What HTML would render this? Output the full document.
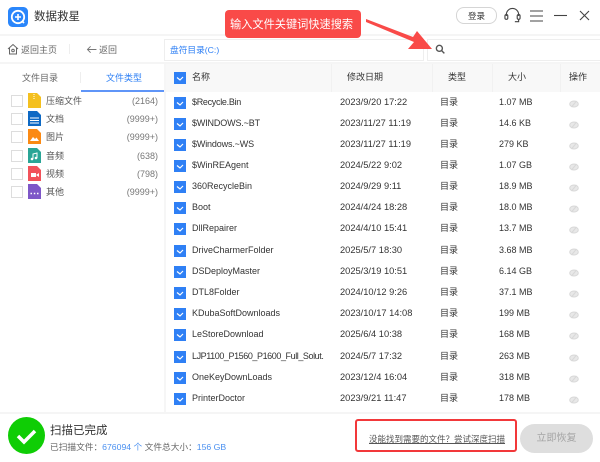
<!DOCTYPE html>
<html lang="zh"><head><meta charset="utf-8"><style>
html,body{margin:0;padding:0;background:#fff}
#p{position:relative;width:600px;height:462px;overflow:hidden;background:#fff;font-family:"Liberation Sans","Noto Sans CJK SC",sans-serif;font-size:9px;color:#333}
#p div,#p svg{position:absolute}
.t{white-space:nowrap;line-height:14px;height:14px;margin-top:2px}
.cb{width:12px;height:12px;background:#2f80f5;left:174px;margin-top:.5px}
.cb svg{left:0;top:0}
.lc{left:11px;width:10px;height:10px;border:1px solid #ddd;background:#fff}
.g{color:#666}
.n{left:192px}.d{left:340px;font-size:9.3px}.y{left:440px}.s{left:499px}
.c{color:#777;text-align:right;width:60px;left:98px}
.l{left:46px;color:#555}
.e{left:569px}
</style></head><body><div id="p">
<!-- title bar -->
<svg style="left:8px;top:7px" width="20" height="20" viewBox="0 0 20 20"><rect width="20" height="20" rx="4.500" fill="#2a86fb"/><circle cx="10" cy="10" r="6.200" fill="none" stroke="#fff" stroke-width="1.800"/><path d="M10 7v6M7 10h6" stroke="#fff" stroke-width="1.600"/><path d="M14 14l2 2" stroke="#fff" stroke-width="1.800"/></svg>
<div class="t" style="left:34px;top:7px;font-size:11.500px;line-height:16px;height:16px;color:#333">数据救星</div>
<div style="left:456px;top:7px;width:39px;height:15px;border:1px solid #d5d5d5;border-radius:8px"></div>
<div class="t" style="left:456px;top:7px;width:41px;text-align:center;font-size:8.500px;color:#333">登录</div>
<svg style="left:504px;top:7px" width="17" height="17" viewBox="0 0 18 17" fill="none" stroke="#444" stroke-width="1.200"><path d="M2.500 9V7.500a6.500 6.500 0 0 1 13 0V9"/><rect x="1" y="7.500" width="3" height="5" rx="1.400"/><rect x="14" y="7.500" width="3" height="5" rx="1.400"/><path d="M15.500 12.500v2.500h-4"/></svg>
<svg style="left:530px;top:10px" width="13" height="12" viewBox="0 0 13 12" stroke="#444" stroke-width="1.100"><path d="M0 1h13M0 6h13M0 11h13"/></svg>
<svg style="left:554px;top:10px" width="13" height="12" viewBox="0 0 13 12" stroke="#444" stroke-width="1.100"><path d="M0 5.500h13"/></svg>
<svg style="left:579px;top:10px" width="11" height="11" viewBox="0 0 11 11" stroke="#444" stroke-width="1.100"><path d="M1 1l9 9M10 1l-9 9"/></svg>
<div style="left:0;top:34px;width:600px;height:2px;background:#f5f5f5"></div>
<!-- nav -->
<svg style="left:7px;top:43px" width="12" height="12" viewBox="0 0 12 12" fill="none" stroke="#666"><path d="M1 6l5-4.500L11 6M2.500 5v6h7V5"/><circle cx="6" cy="7.500" r="1.300"/></svg>
<div class="t g" style="left:21px;top:41px">返回主页</div>
<div style="left:69px;top:44px;width:1px;height:10px;background:#eee"></div>
<svg style="left:86px;top:45px" width="11" height="9" viewBox="0 0 11 10" fill="none" stroke="#777"><path d="M11 5H1M4.500 1.500L1 5l3.500 3.500"/></svg>
<div class="t g" style="left:99px;top:41px">返回</div>
<div style="left:164px;top:39px;width:258px;height:20px;border:1px solid #eee"></div>
<div class="t" style="left:170px;top:41px;color:#2f80f5;font-size:8.700px">盘符目录(C:)</div>
<div style="left:427px;top:39px;width:175px;height:20px;border:1px solid #eee"></div>
<svg style="left:435px;top:44px" width="10" height="10" viewBox="0 0 11 11" fill="none" stroke="#555" stroke-width="1.500"><circle cx="4.800" cy="4.800" r="3.300"/><path d="M7.300 7.300l3 3"/></svg>
<div style="left:0;top:62px;width:600px;height:2px;background:#f5f5f5"></div>
<!-- callout -->
<div style="left:225px;top:10px;width:136px;height:28px;background:#f94a48;border-radius:4px"></div>
<div class="t" style="left:230px;top:16px;font-size:11.200px;color:#fff">输入文件关键词快速搜索</div>
<svg style="left:360px;top:14px" width="74" height="38" viewBox="0 0 74 38"><path d="M6 5L53 23 57 17 72 35 48 35 54 28 6 8z" fill="#f94a48"/></svg>
<!-- left tabs -->
<div class="t g" style="left:22px;top:69px">文件目录</div>
<div style="left:80px;top:72px;width:1px;height:11px;background:#eee"></div>
<div class="t" style="left:106px;top:69px;color:#2f80f5">文件类型</div>
<div style="left:81px;top:89.500px;width:83px;height:2px;background:#5f95f8"></div>
<div style="left:164px;top:64px;width:2px;height:348px;background:#f6f6f6"></div>
<!-- left list -->
<div class="lc" style="top:95px"></div><div class="lc" style="top:113px"></div><div class="lc" style="top:131px"></div><div class="lc" style="top:150px"></div><div class="lc" style="top:168px"></div><div class="lc" style="top:186px"></div>
<svg style="left:28px;top:93px" width="13" height="15"><path d="M0 0h9l4 4v11H0z" fill="#f4c01f"/><path d="M6 1v6" stroke="#fff" stroke-dasharray="1 1"/></svg>
<svg style="left:28px;top:111px" width="13" height="15"><path d="M0 0h9l4 4v11H0z" fill="#0e69c4"/><path d="M2 7h9M2 9.500h9M2 12h9" stroke="#fff"/></svg>
<svg style="left:28px;top:129px" width="13" height="15"><path d="M0 0h9l4 4v11H0z" fill="#fb8a14"/><path d="M2 12l3-4 2 2 1.500-1.500L11 12z" fill="#fff"/></svg>
<svg style="left:28px;top:148px" width="13" height="15"><path d="M0 0h9l4 4v11H0z" fill="#2aa596"/><path d="M5 11V6l4-1v5" fill="none" stroke="#fff"/><circle cx="4" cy="11" r="1.300" fill="#fff"/><circle cx="8" cy="10" r="1.300" fill="#fff"/></svg>
<svg style="left:28px;top:166px" width="13" height="15"><path d="M0 0h9l4 4v11H0z" fill="#f2525a"/><rect x="3" y="7" width="5" height="4" fill="#fff"/><path d="M8 9l3-2v4z" fill="#fff"/></svg>
<svg style="left:28px;top:184px" width="13" height="15"><path d="M0 0h9l4 4v11H0z" fill="#7e57c8"/><path d="M2.500 9.500h1.500M5.800 9.500h1.500M9 9.500h1.500" stroke="#fff" stroke-width="1.400"/></svg>
<div class="t l" style="top:92px">压缩文件</div><div class="t c" style="top:92px">(2164)</div>
<div class="t l" style="top:110px">文档</div><div class="t c" style="top:110px">(9999+)</div>
<div class="t l" style="top:128px">图片</div><div class="t c" style="top:128px">(9999+)</div>
<div class="t l" style="top:147px">音频</div><div class="t c" style="top:147px">(638)</div>
<div class="t l" style="top:165px">视频</div><div class="t c" style="top:165px">(798)</div>
<div class="t l" style="top:183px">其他</div><div class="t c" style="top:183px">(9999+)</div>
<!-- table header -->
<div style="left:166px;top:64px;width:434px;height:28px;background:#f8f8f8"></div>
<div style="left:331px;top:64px;width:1px;height:28px;background:#f1f1f1"></div>
<div style="left:432px;top:64px;width:1px;height:28px;background:#f1f1f1"></div>
<div style="left:492px;top:64px;width:1px;height:28px;background:#f1f1f1"></div>
<div style="left:560px;top:64px;width:1px;height:28px;background:#f1f1f1"></div>
<div class="cb" style="top:71px"><svg width="12" height="12" fill="none" stroke="#fff" stroke-width="1.200"><path d="M3 5.500l3 2.500 3-3"/></svg></div>
<div class="t" style="left:192px;top:68px">名称</div>
<div class="t" style="left:347px;top:68px">修改日期</div>
<div class="t" style="left:448px;top:68px">类型</div>
<div class="t" style="left:508px;top:68px">大小</div>
<div class="t" style="left:569px;top:68px">操作</div>
<!-- rows -->
<div class="cb" style="top:96px"><svg width="12" height="12" fill="none" stroke="#fff" stroke-width="1.200"><path d="M3 5.500l3 2.500 3-3"/></svg></div><div class="t n" style="top:93px;letter-spacing:-.3px">$Recycle.Bin</div><div class="t d" style="top:93px">2023/9/20 17:22</div><div class="t y" style="top:93px">目录</div><div class="t s" style="top:93px">1.07 MB</div>
<div class="cb" style="top:117px"><svg width="12" height="12" fill="none" stroke="#fff" stroke-width="1.200"><path d="M3 5.500l3 2.500 3-3"/></svg></div><div class="t n" style="top:114px;letter-spacing:-.15px">$WINDOWS.~BT</div><div class="t d" style="top:114px">2023/11/27 11:19</div><div class="t y" style="top:114px">目录</div><div class="t s" style="top:114px">14.6 KB</div>
<div class="cb" style="top:138px"><svg width="12" height="12" fill="none" stroke="#fff" stroke-width="1.200"><path d="M3 5.500l3 2.500 3-3"/></svg></div><div class="t n" style="top:135px;letter-spacing:-.15px">$Windows.~WS</div><div class="t d" style="top:135px">2023/11/27 11:19</div><div class="t y" style="top:135px">目录</div><div class="t s" style="top:135px">279 KB</div>
<div class="cb" style="top:159px"><svg width="12" height="12" fill="none" stroke="#fff" stroke-width="1.200"><path d="M3 5.500l3 2.500 3-3"/></svg></div><div class="t n" style="top:156px">$WinREAgent</div><div class="t d" style="top:156px">2024/5/22 9:02</div><div class="t y" style="top:156px">目录</div><div class="t s" style="top:156px">1.07 GB</div>
<div class="cb" style="top:180px"><svg width="12" height="12" fill="none" stroke="#fff" stroke-width="1.200"><path d="M3 5.500l3 2.500 3-3"/></svg></div><div class="t n" style="top:177px">360RecycleBin</div><div class="t d" style="top:177px">2024/9/29 9:11</div><div class="t y" style="top:177px">目录</div><div class="t s" style="top:177px">18.9 MB</div>
<div class="cb" style="top:201px"><svg width="12" height="12" fill="none" stroke="#fff" stroke-width="1.200"><path d="M3 5.500l3 2.500 3-3"/></svg></div><div class="t n" style="top:198px">Boot</div><div class="t d" style="top:198px">2024/4/24 18:28</div><div class="t y" style="top:198px">目录</div><div class="t s" style="top:198px">18.0 MB</div>
<div class="cb" style="top:222px"><svg width="12" height="12" fill="none" stroke="#fff" stroke-width="1.200"><path d="M3 5.500l3 2.500 3-3"/></svg></div><div class="t n" style="top:219px">DllRepairer</div><div class="t d" style="top:219px">2024/4/10 15:41</div><div class="t y" style="top:219px">目录</div><div class="t s" style="top:219px">13.7 MB</div>
<div class="cb" style="top:244px"><svg width="12" height="12" fill="none" stroke="#fff" stroke-width="1.200"><path d="M3 5.500l3 2.500 3-3"/></svg></div><div class="t n" style="top:241px">DriveCharmerFolder</div><div class="t d" style="top:241px">2025/5/7 18:30</div><div class="t y" style="top:241px">目录</div><div class="t s" style="top:241px">3.68 MB</div>
<div class="cb" style="top:265px"><svg width="12" height="12" fill="none" stroke="#fff" stroke-width="1.200"><path d="M3 5.500l3 2.500 3-3"/></svg></div><div class="t n" style="top:262px">DSDeployMaster</div><div class="t d" style="top:262px">2025/3/19 10:51</div><div class="t y" style="top:262px">目录</div><div class="t s" style="top:262px">6.14 GB</div>
<div class="cb" style="top:286px"><svg width="12" height="12" fill="none" stroke="#fff" stroke-width="1.200"><path d="M3 5.500l3 2.500 3-3"/></svg></div><div class="t n" style="top:283px">DTL8Folder</div><div class="t d" style="top:283px">2024/10/12 9:26</div><div class="t y" style="top:283px">目录</div><div class="t s" style="top:283px">37.1 MB</div>
<div class="cb" style="top:307px"><svg width="12" height="12" fill="none" stroke="#fff" stroke-width="1.200"><path d="M3 5.500l3 2.500 3-3"/></svg></div><div class="t n" style="top:304px">KDubaSoftDownloads</div><div class="t d" style="top:304px">2023/10/17 14:08</div><div class="t y" style="top:304px">目录</div><div class="t s" style="top:304px">199 MB</div>
<div class="cb" style="top:328px"><svg width="12" height="12" fill="none" stroke="#fff" stroke-width="1.200"><path d="M3 5.500l3 2.500 3-3"/></svg></div><div class="t n" style="top:325px">LeStoreDownload</div><div class="t d" style="top:325px">2025/6/4 10:38</div><div class="t y" style="top:325px">目录</div><div class="t s" style="top:325px">168 MB</div>
<div class="cb" style="top:350px"><svg width="12" height="12" fill="none" stroke="#fff" stroke-width="1.200"><path d="M3 5.500l3 2.500 3-3"/></svg></div><div class="t n" style="top:347px;letter-spacing:-.42px">LJP1100_P1560_P1600_Full_Solut.</div><div class="t d" style="top:347px">2024/5/7 17:32</div><div class="t y" style="top:347px">目录</div><div class="t s" style="top:347px">263 MB</div>
<div class="cb" style="top:371px"><svg width="12" height="12" fill="none" stroke="#fff" stroke-width="1.200"><path d="M3 5.500l3 2.500 3-3"/></svg></div><div class="t n" style="top:368px">OneKeyDownLoads</div><div class="t d" style="top:368px">2023/12/4 16:04</div><div class="t y" style="top:368px">目录</div><div class="t s" style="top:368px">318 MB</div>
<div class="cb" style="top:392px"><svg width="12" height="12" fill="none" stroke="#fff" stroke-width="1.200"><path d="M3 5.500l3 2.500 3-3"/></svg></div><div class="t n" style="top:389px">PrinterDoctor</div><div class="t d" style="top:389px">2023/9/21 11:47</div><div class="t y" style="top:389px">目录</div><div class="t s" style="top:389px">178 MB</div>
<!-- eye icons -->
<svg class="e" style="top:100px" width="10" height="8" viewBox="0 0 10 8" fill="#e8e8e8" stroke="#d8d8d8"><ellipse cx="5" cy="4" rx="4.300" ry="3"/><path d="M2.500 7l5-6"/></svg>
<svg class="e" style="top:121px" width="10" height="8" viewBox="0 0 10 8" fill="#e8e8e8" stroke="#d8d8d8"><ellipse cx="5" cy="4" rx="4.300" ry="3"/><path d="M2.500 7l5-6"/></svg>
<svg class="e" style="top:142px" width="10" height="8" viewBox="0 0 10 8" fill="#e8e8e8" stroke="#d8d8d8"><ellipse cx="5" cy="4" rx="4.300" ry="3"/><path d="M2.500 7l5-6"/></svg>
<svg class="e" style="top:163px" width="10" height="8" viewBox="0 0 10 8" fill="#e8e8e8" stroke="#d8d8d8"><ellipse cx="5" cy="4" rx="4.300" ry="3"/><path d="M2.500 7l5-6"/></svg>
<svg class="e" style="top:184px" width="10" height="8" viewBox="0 0 10 8" fill="#e8e8e8" stroke="#d8d8d8"><ellipse cx="5" cy="4" rx="4.300" ry="3"/><path d="M2.500 7l5-6"/></svg>
<svg class="e" style="top:205px" width="10" height="8" viewBox="0 0 10 8" fill="#e8e8e8" stroke="#d8d8d8"><ellipse cx="5" cy="4" rx="4.300" ry="3"/><path d="M2.500 7l5-6"/></svg>
<svg class="e" style="top:226px" width="10" height="8" viewBox="0 0 10 8" fill="#e8e8e8" stroke="#d8d8d8"><ellipse cx="5" cy="4" rx="4.300" ry="3"/><path d="M2.500 7l5-6"/></svg>
<svg class="e" style="top:248px" width="10" height="8" viewBox="0 0 10 8" fill="#e8e8e8" stroke="#d8d8d8"><ellipse cx="5" cy="4" rx="4.300" ry="3"/><path d="M2.500 7l5-6"/></svg>
<svg class="e" style="top:269px" width="10" height="8" viewBox="0 0 10 8" fill="#e8e8e8" stroke="#d8d8d8"><ellipse cx="5" cy="4" rx="4.300" ry="3"/><path d="M2.500 7l5-6"/></svg>
<svg class="e" style="top:290px" width="10" height="8" viewBox="0 0 10 8" fill="#e8e8e8" stroke="#d8d8d8"><ellipse cx="5" cy="4" rx="4.300" ry="3"/><path d="M2.500 7l5-6"/></svg>
<svg class="e" style="top:311px" width="10" height="8" viewBox="0 0 10 8" fill="#e8e8e8" stroke="#d8d8d8"><ellipse cx="5" cy="4" rx="4.300" ry="3"/><path d="M2.500 7l5-6"/></svg>
<svg class="e" style="top:332px" width="10" height="8" viewBox="0 0 10 8" fill="#e8e8e8" stroke="#d8d8d8"><ellipse cx="5" cy="4" rx="4.300" ry="3"/><path d="M2.500 7l5-6"/></svg>
<svg class="e" style="top:354px" width="10" height="8" viewBox="0 0 10 8" fill="#e8e8e8" stroke="#d8d8d8"><ellipse cx="5" cy="4" rx="4.300" ry="3"/><path d="M2.500 7l5-6"/></svg>
<svg class="e" style="top:375px" width="10" height="8" viewBox="0 0 10 8" fill="#e8e8e8" stroke="#d8d8d8"><ellipse cx="5" cy="4" rx="4.300" ry="3"/><path d="M2.500 7l5-6"/></svg>
<svg class="e" style="top:396px" width="10" height="8" viewBox="0 0 10 8" fill="#e8e8e8" stroke="#d8d8d8"><ellipse cx="5" cy="4" rx="4.300" ry="3"/><path d="M2.500 7l5-6"/></svg>
<!-- footer -->
<div style="left:0;top:412px;width:600px;height:50px;background:#fff;border-top:2px solid #f5f5f5;box-sizing:border-box"></div>
<svg style="left:8px;top:417px" width="37" height="37" viewBox="0 0 37 37"><circle cx="18.500" cy="18.500" r="18.500" fill="#0fcd05"/><path d="M10 19l6 6 11-11" fill="none" stroke="#fff" stroke-width="3.500"/></svg>
<div class="t" style="left:50px;top:421px;font-size:11.500px;line-height:16px;height:16px">扫描已完成</div>
<div class="t" style="left:50px;top:438px;font-size:8.700px;color:#666">已扫描文件：<span style="color:#4a90f0">676094 个</span> 文件总大小：<span style="color:#4a90f0">156 GB</span></div>
<div style="left:355px;top:419px;width:162px;height:33px;border:2px solid #f2383a;border-radius:3px;box-sizing:border-box"></div>
<div class="t" style="left:369px;top:430px;font-size:8.500px;color:#555;text-decoration:underline">没能找到需要的文件？尝试深度扫描</div>
<div style="left:520px;top:424px;width:73px;height:29px;border-radius:15px;background:#dedede"></div>
<div class="t" style="left:520px;top:430px;width:73px;text-align:center;color:#a5a5a5;font-size:10px">立即恢复</div>
</div></body></html>
